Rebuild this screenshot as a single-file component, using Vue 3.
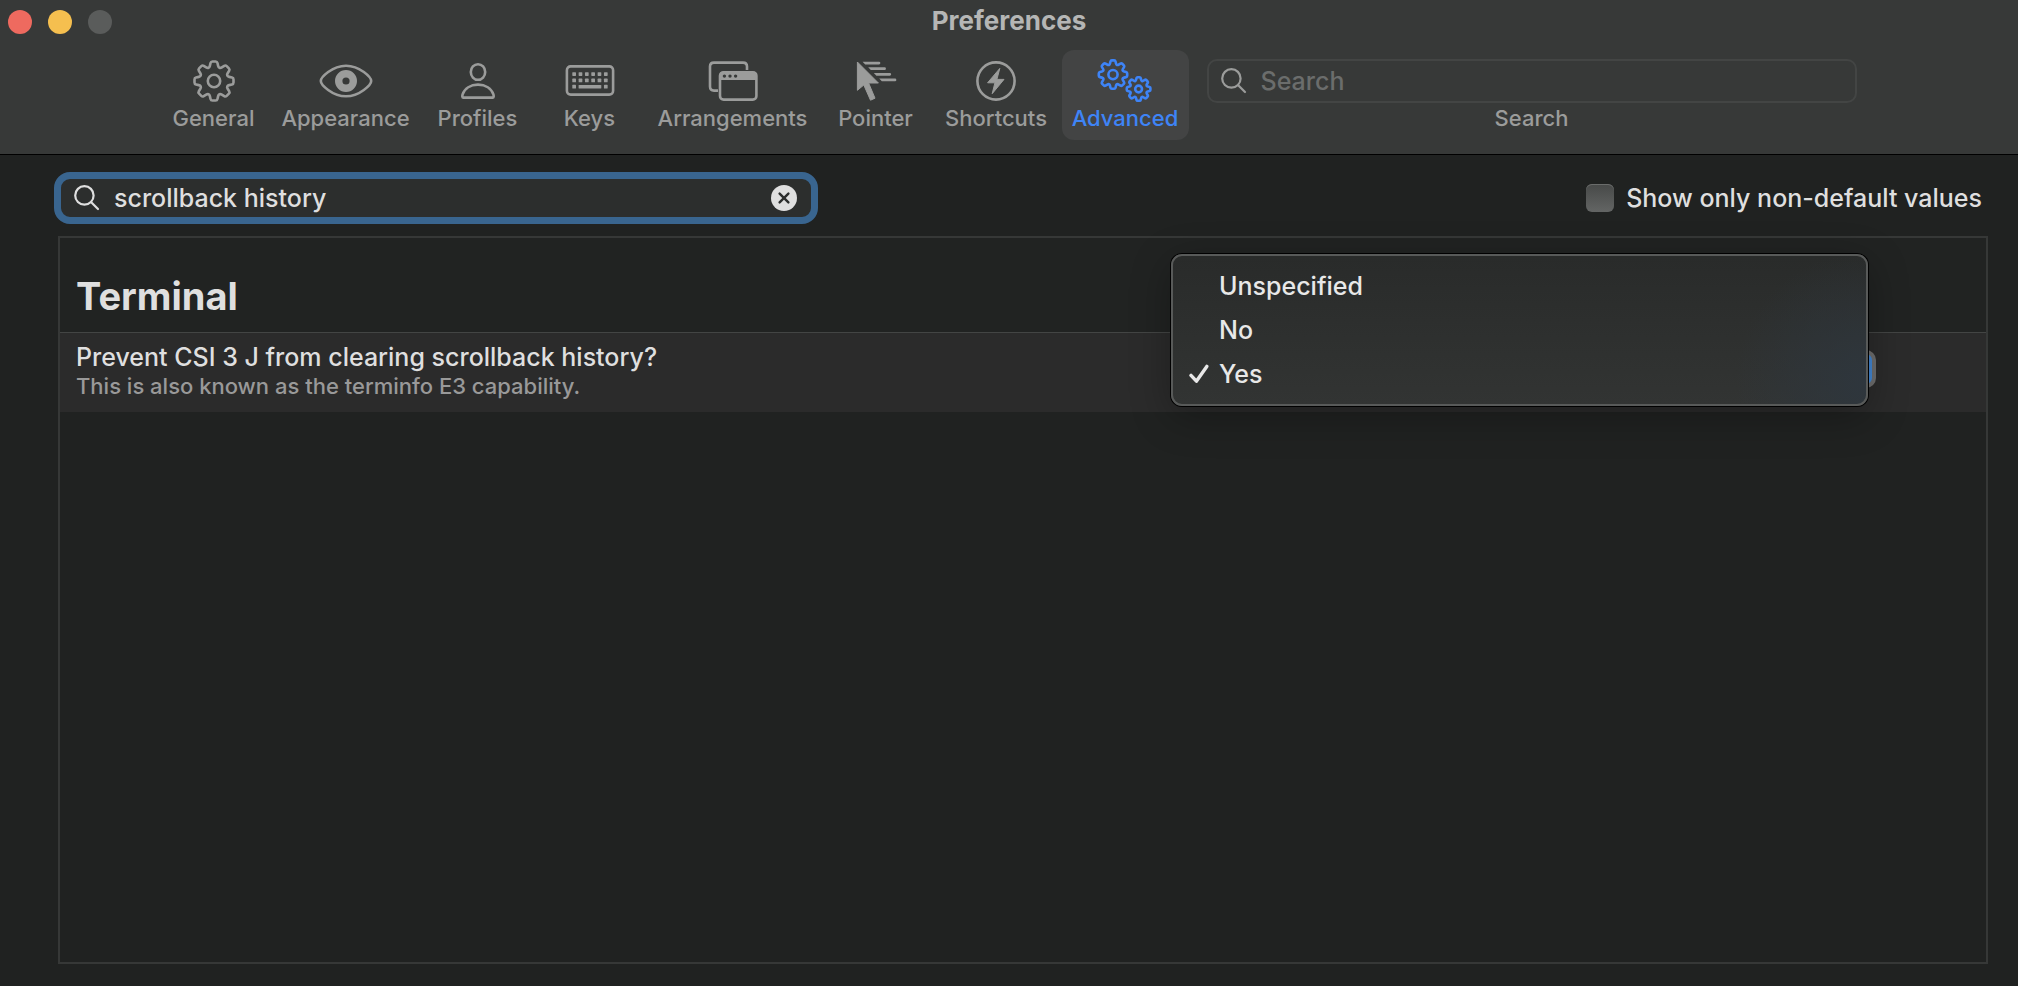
<script setup>
import { ref } from 'vue'

const query = ref('scrollback history')
const globalQuery = ref('')
const onlyChanged = ref(false)
const value = ref('Yes')
const options = ['Unspecified', 'No', 'Yes']
const active = ref('Advanced')

// Closed outline of an eight-toothed gear with softened corners.
function gear(cx, cy, outer) {
  const root = outer * 0.7
  const tip = outer * 0.16
  const base = outer * 0.23
  const corner = outer * 0.08
  const points = []
  for (let i = 0; i < 8; i++) {
    const a = (i * Math.PI) / 4
    for (const [x, y] of [[-base, -root], [-tip, -outer], [tip, -outer], [base, -root]]) {
      points.push([cx + x * Math.cos(a) - y * Math.sin(a), cy + x * Math.sin(a) + y * Math.cos(a)])
    }
  }
  const toward = (p, q) => {
    const d = Math.hypot(q[0] - p[0], q[1] - p[1])
    const t = Math.min(corner / d, 0.5)
    return `${(p[0] + (q[0] - p[0]) * t).toFixed(2)} ${(p[1] + (q[1] - p[1]) * t).toFixed(2)}`
  }
  return points
    .map((p, i) => {
      const prev = points[(i + points.length - 1) % points.length]
      const next = points[(i + 1) % points.length]
      return `${i ? 'L' : 'M'}${toward(p, prev)} Q${p[0].toFixed(2)} ${p[1].toFixed(2)} ${toward(p, next)}`
    })
    .join(' ') + ' Z'
}

const tabs = [
  { name: 'General', size: 'narrow' },
  { name: 'Appearance', size: 'wide' },
  { name: 'Profiles', size: 'narrow' },
  { name: 'Keys', size: 'narrow' },
  { name: 'Arrangements', size: 'widest' },
  { name: 'Pointer', size: 'narrow' },
  { name: 'Shortcuts', size: 'medium' },
  { name: 'Advanced', size: 'medium' },
]
</script>

<template>
  <div class="window">
    <header class="header">
      <div class="titlebar">
        <div class="lights">
          <button class="light close" aria-label="Close"></button>
          <button class="light minimize" aria-label="Minimize"></button>
          <button class="light zoom" aria-label="Zoom" disabled></button>
        </div>
        <h1 class="title">Preferences</h1>
      </div>

      <nav class="toolbar" aria-label="Preference sections">
        <button
          v-for="tab in tabs"
          :key="tab.name"
          class="tab"
          :class="[tab.size, { active: active === tab.name }]"
          @click="active = tab.name"
        >
          <svg class="tab-icon" viewBox="-30 -22 60 44" aria-hidden="true">
            <g v-if="tab.name === 'General'" class="line">
              <path :d="gear(0, 0, 19.5)" />
              <circle r="6.2" />
            </g>
            <g v-else-if="tab.name === 'Appearance'">
              <path class="line" d="M-25.2 0 C-25.2 -3.5 -14 -15.3 0 -15.3 C14 -15.3 25.2 -3.5 25.2 0 C25.2 3.5 14 15.3 0 15.3 C-14 15.3 -25.2 3.5 -25.2 0 Z" />
              <circle class="ring" r="7.3" />
            </g>
            <g v-else-if="tab.name === 'Profiles'" class="line">
              <ellipse cy="-9" rx="7.2" ry="7.8" />
              <path d="M-14.6 16.6 C-16 16.6 -15.8 14.8 -15.4 13.4 C-13.4 7.4 -7.4 3.6 0 3.6 C7.4 3.6 13.4 7.4 15.4 13.4 C15.8 14.8 16 16.6 14.6 16.6 Z" />
            </g>
            <g v-else-if="tab.name === 'Keys'">
              <rect class="line" x="-23.1" y="-14.6" width="46.2" height="28.2" rx="3.8" />
              <g class="fill">
                <template v-for="row in 3" :key="row">
                  <template v-for="col in 6" :key="col">
                    <rect
                      v-if="row < 3 || col === 1 || col === 6"
                      :x="-17.7 + (col - 1) * 6.33"
                      :y="-8.8 + (row - 1) * 6.33"
                      width="3.7"
                      height="3.7"
                      rx="0.6"
                    />
                  </template>
                </template>
                <rect x="-11.4" y="3.9" width="22.7" height="3.7" rx="0.6" />
              </g>
            </g>
            <g v-else-if="tab.name === 'Arrangements'">
              <path class="line" d="M-15 9.6 H-19 Q-23 9.6 -23 5.6 V-14.4 Q-23 -18.4 -19 -18.4 H10 Q14 -18.4 14 -14.4 V-11" />
              <rect class="line" x="-13" y="-8.8" width="36.4" height="27.4" rx="3.6" />
              <path class="fill" d="M-13 -1 V-6 Q-13 -9.4 -9 -9.4 H20 Q23.4 -9.4 23.4 -6 V-1 Z" />
              <g class="hole">
                <circle cx="-8.6" cy="-4.9" r="1.7" />
                <circle cx="-3" cy="-4.9" r="1.7" />
                <circle cx="2.6" cy="-4.9" r="1.7" />
              </g>
            </g>
            <g v-else-if="tab.name === 'Pointer'">
              <path class="fill arrow" d="M-18.6 -19 V9.3 L-12.2 4 L-5.5 19.2 L-1 17.2 L-7.4 2 H2.4 Z" />
              <path class="fill" d="M-13.4 -19.3 H3 a1.3 1.3 0 0 1 0 2.7 H-10.8 Z M-7.8 -13.7 H8.6 a1.3 1.3 0 0 1 0 2.7 H-5.2 Z M-2.2 -8 H13.8 a1.3 1.3 0 0 1 0 2.7 H.4 Z M3.2 -2.4 H19 a1.3 1.3 0 0 1 0 2.7 H5.8 Z" />
            </g>
            <g v-else-if="tab.name === 'Shortcuts'">
              <circle class="line" r="18.6" />
              <path class="fill bolt" d="M3.8 -12.6 L-8.4 1.8 H-1.1 L-3.8 12.7 L8 -1.6 H.9 Z" />
            </g>
            <g v-else class="line">
              <path :d="gear(-12, -6.4, 14.2)" />
              <circle cx="-12" cy="-6.4" r="4.6" />
              <path :d="gear(13.6, 8, 11.8)" />
              <circle cx="13.6" cy="8" r="3.4" />
            </g>
          </svg>
          <span class="tab-label">{{ tab.name }}</span>
        </button>

        <div class="tool-search">
          <div class="tool-field">
            <svg class="glass" viewBox="0 0 26 26" aria-hidden="true">
              <circle cx="10.4" cy="10.4" r="9.2" />
              <path d="M17.2 17.2 L24 24" />
            </svg>
            <input id="tool-query" v-model="globalQuery" type="text" placeholder="Search" />
          </div>
          <label class="tab-label" for="tool-query">Search</label>
        </div>
      </nav>
    </header>

    <main class="content">
      <div class="filters">
        <div class="field">
          <svg class="glass" viewBox="0 0 26 26" aria-hidden="true">
            <circle cx="10.4" cy="10.4" r="9.2" />
            <path d="M17.2 17.2 L24 24" />
          </svg>
          <input v-model="query" type="text" aria-label="Filter settings" />
          <button class="clear" aria-label="Clear" @click="query = ''">
            <svg viewBox="-13 -13 26 26" aria-hidden="true">
              <path d="M-4.4 -4.4 L4.4 4.4 M4.4 -4.4 L-4.4 4.4" />
            </svg>
          </button>
        </div>
        <label class="toggle">
          <input v-model="onlyChanged" type="checkbox" />
          <span>Show only non-default values</span>
        </label>
      </div>

      <section class="panel">
        <h2 class="group">Terminal</h2>
        <div class="setting">
          <div class="description">
            <label class="name" for="csi">Prevent CSI 3 J from clearing scrollback history?</label>
            <p class="note">This is also known as the terminfo E3 capability.</p>
          </div>
          <div class="chooser">
            <select id="csi" v-model="value" class="popup">
              <option v-for="o in options" :key="o">{{ o }}</option>
            </select>
            <ul class="menu">
              <li v-for="o in options" :key="o">
                <button class="choice" @click="value = o">
                  <svg class="tick" viewBox="0 0 20 20" aria-hidden="true">
                    <path v-if="o === value" d="M2 11.4 L7.4 17.2 L17.8 2.4" />
                  </svg>
                  <span>{{ o }}</span>
                </button>
              </li>
            </ul>
          </div>
        </div>
      </section>
    </main>
  </div>
</template>

<style>
body {
  margin: 0;
  background: #202221;
}
</style>

<style scoped>
* {
  box-sizing: border-box;
}
.window {
  display: flex;
  flex-direction: column;
  min-height: 100vh;
  background: #202221;
  color: #dfdfdf;
  font-family: Inter, "Liberation Sans", sans-serif;
  font-size: 25px;
  font-weight: 500;
}
button,
input,
select {
  margin: 0;
  padding: 0;
  border: 0;
  background: none;
  color: inherit;
  font: inherit;
  outline: none;
}
.header {
  padding-bottom: 14px;
  border-bottom: 1px solid #000;
  background: #373938;
}
.titlebar {
  display: grid;
  grid-template-columns: 1fr auto 1fr;
  height: 50px;
  padding: 6px 8px 0;
}
.lights {
  display: flex;
  gap: 16px;
  padding-top: 4px;
}
.light {
  width: 24px;
  height: 24px;
  border-radius: 50%;
}
.close { background: #ee6a5f; }
.minimize { background: #f5bf4f; }
.zoom { background: #5a5c5b; }
.title {
  margin: 0;
  color: #b5b6b5;
  font-size: 26px;
  font-weight: 700;
  line-height: 30px;
}
.toolbar {
  display: flex;
  justify-content: center;
  gap: 2px;
  padding-right: 3px;
}
.tab {
  display: flex;
  flex: none;
  flex-direction: column;
  align-items: center;
  height: 90px;
  padding-top: 9px;
  border-radius: 12px;
  color: #9b9c9b;
}
.narrow { width: 110px; }
.medium { width: 127px; }
.wide { width: 150px; }
.widest { width: 172px; }
.active {
  background: #434444;
  color: #3e84f7;
}
.tab-icon {
  width: 60px;
  height: 44px;
}
.tab-label {
  font-size: 22px;
  line-height: 30px;
}
.line {
  fill: none;
  stroke: currentColor;
  stroke-width: 2.6;
  stroke-linejoin: round;
}
.fill { fill: currentColor; }
.ring {
  fill: none;
  stroke: currentColor;
  stroke-width: 7.4;
}
.hole { fill: #373938; }
.arrow,
.bolt {
  stroke: currentColor;
  stroke-width: 1;
  stroke-linejoin: round;
}
.tool-search {
  display: flex;
  flex: 0 1 650px;
  flex-direction: column;
  align-items: center;
  margin-left: 16px;
  padding-top: 9px;
  color: #9b9c9b;
}
.tool-field {
  display: flex;
  align-items: center;
  gap: 14px;
  width: 100%;
  height: 44px;
  padding: 0 12px;
  border: 2px solid #434544;
  border-radius: 10px;
}
.tool-field input,
.field input {
  flex: 1;
  min-width: 0;
  height: 34px;
}
.tool-field input::placeholder {
  color: #6b6d6c;
  opacity: 1;
}
.glass {
  flex: none;
  width: 26px;
  height: 26px;
  fill: none;
  stroke: currentColor;
  stroke-width: 2.2;
  stroke-linecap: round;
}
.content {
  display: flex;
  flex: 1;
  flex-direction: column;
  gap: 12px;
  padding: 17px 30px 22px 54px;
}
.filters {
  display: flex;
  align-items: center;
  justify-content: space-between;
  padding-right: 6px;
}
.field {
  display: flex;
  align-items: center;
  gap: 14px;
  width: 764px;
  height: 52px;
  padding: 0 14px 0 13px;
  border: 7px solid #39658f;
  border-radius: 16px;
  background: #2c2e2d;
}
.clear {
  width: 26px;
  height: 26px;
  border-radius: 50%;
  background: #dfdfdf;
}
.clear svg {
  display: block;
  width: 26px;
  height: 26px;
  stroke: #2c2e2d;
  stroke-width: 2.4;
  stroke-linecap: round;
}
.toggle {
  display: flex;
  align-items: center;
  gap: 12px;
}
.toggle input {
  width: 28px;
  height: 28px;
  border-radius: 6px;
  background: linear-gradient(#474948, #636564);
  box-shadow: inset 0 1px #6a6c6b;
  appearance: none;
}
.panel {
  flex: 1;
  margin-left: 4px;
  border: 2px solid #363837;
}
.group {
  margin: 0;
  padding: 34px 16px 12px;
  background: #212322;
  font-size: 38px;
  font-weight: 700;
  line-height: 48px;
}
.setting {
  display: flex;
  align-items: flex-start;
  justify-content: space-between;
  height: 80px;
  padding: 9px 110px 0 16px;
  border-top: 1px solid #434544;
  background: #2b2b2b;
}
.description {
  line-height: 30px;
}
.name {
  display: block;
}
.note {
  margin: 0;
  color: #999;
  font-size: 22px;
  line-height: 28px;
}
.chooser {
  position: relative;
  width: 704px;
  margin-top: 8px;
}
.popup {
  display: block;
  width: 100%;
  height: 38px;
  border: 4px solid #6f6f6f;
  border-radius: 10px;
  background: linear-gradient(90deg, #6f6f6f 95%, #4388d5 95%);
  color: transparent;
  appearance: none;
}
.menu {
  position: absolute;
  top: -96px;
  right: 8px;
  width: 697px;
  margin: 0;
  padding: 8px 0;
  border: 2px solid #585a59;
  border-radius: 11px;
  background:
    radial-gradient(circle at 100% 85%, #2e363d, rgba(46, 52, 58, 0) 130px),
    linear-gradient(#292b2a, #323433);
  box-shadow: 0 0 0 1px #000, 0 10px 40px rgba(0, 0, 0, 0.3);
  list-style: none;
}
.choice {
  display: flex;
  align-items: center;
  gap: 10px;
  width: 100%;
  height: 44px;
  padding-left: 16px;
  color: #e8e8e8;
  text-align: left;
}
.tick {
  width: 20px;
  height: 20px;
  fill: none;
  stroke: currentColor;
  stroke-width: 3.4;
  stroke-linecap: round;
  stroke-linejoin: round;
}
</style>
